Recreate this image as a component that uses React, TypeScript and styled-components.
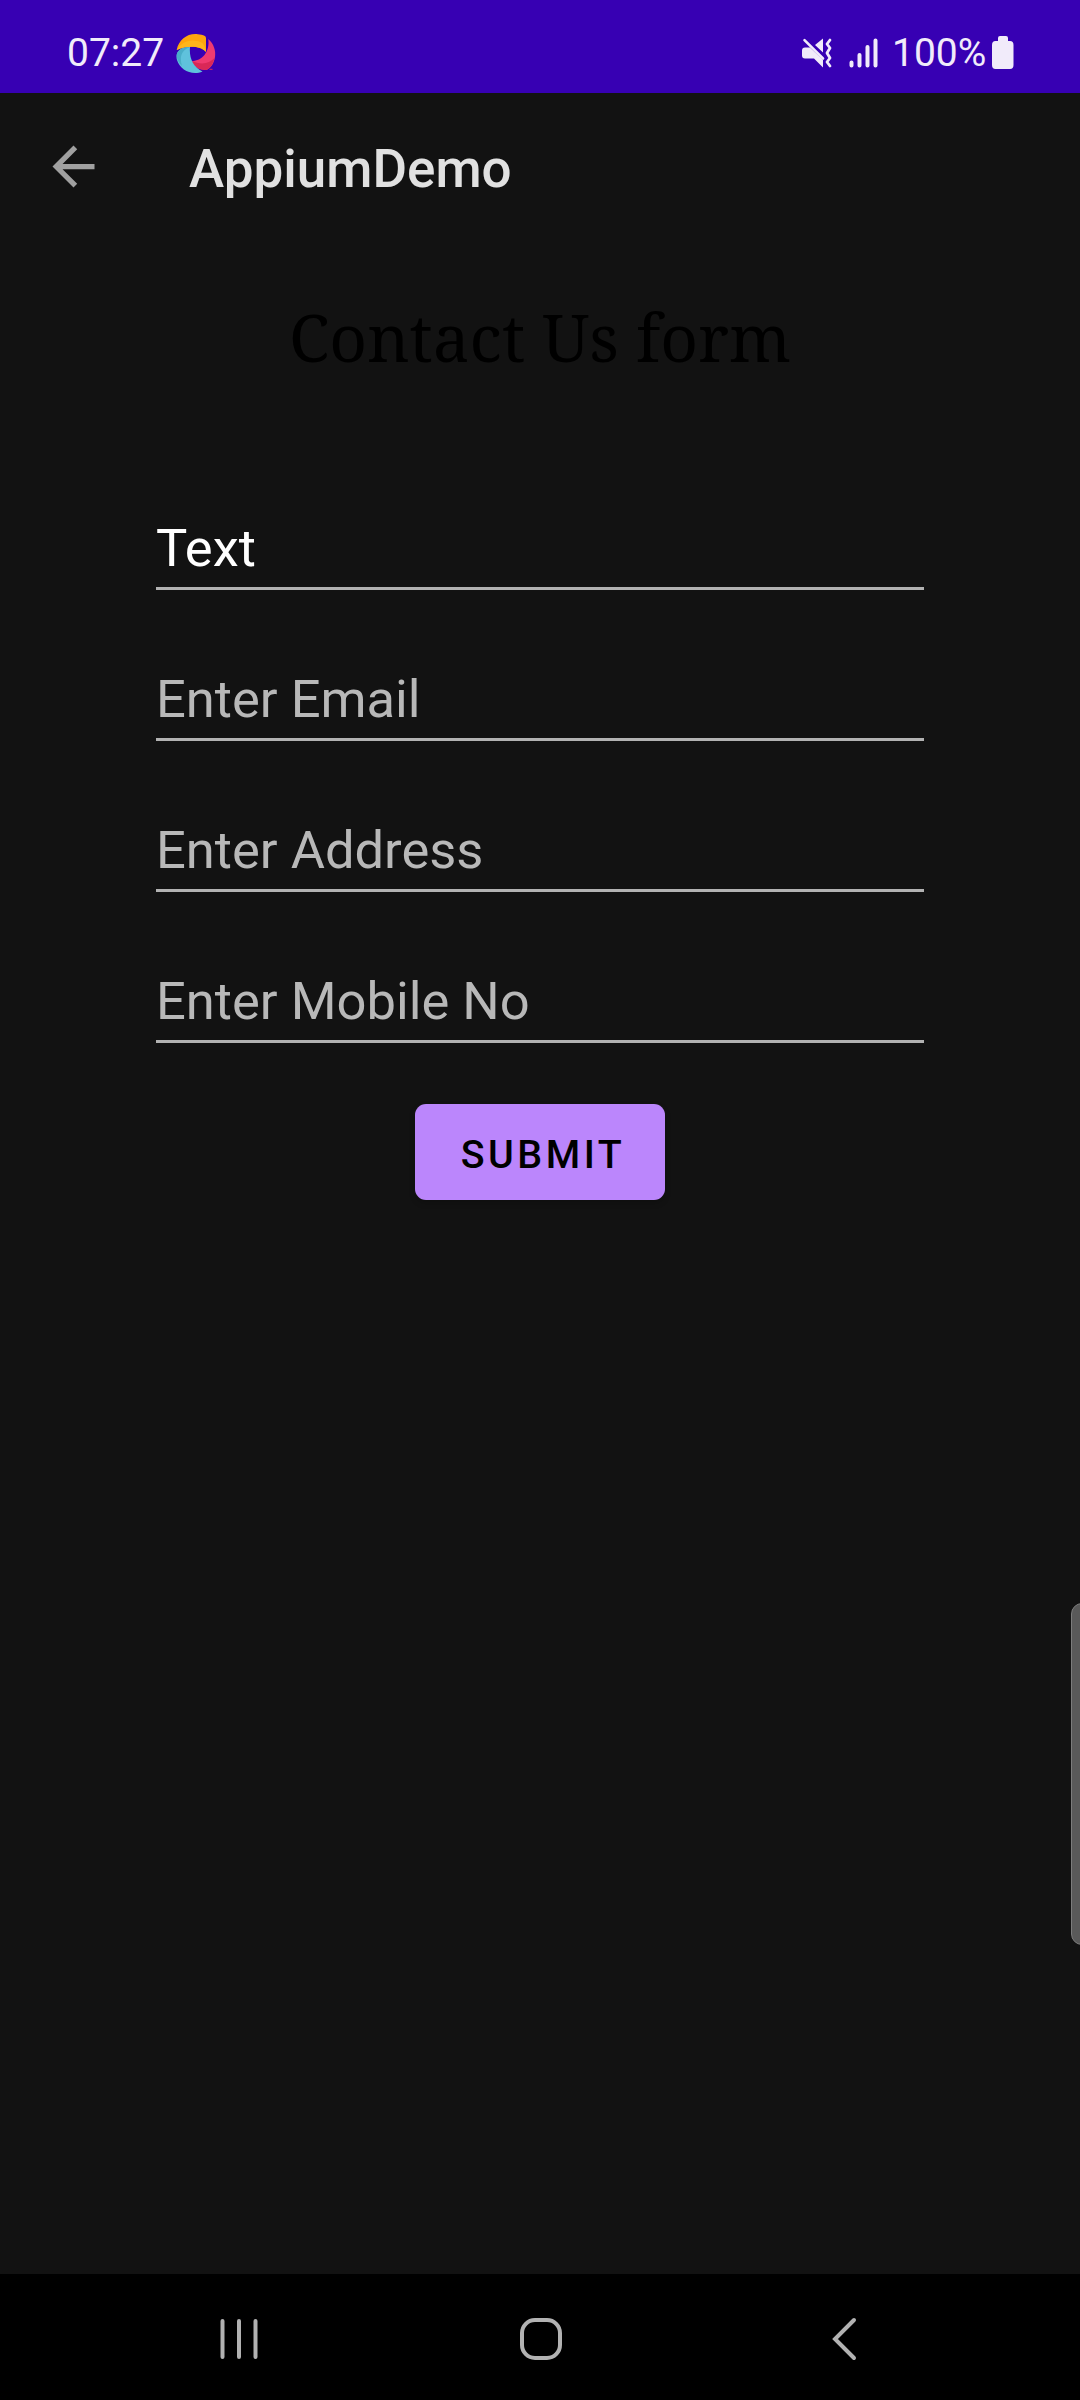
import React from "react";
import styled, { createGlobalStyle } from "styled-components";

const GlobalStyle = createGlobalStyle`
  * { box-sizing: border-box; }
  html, body { margin: 0; background: #121212; }
  body { font-family: Roboto, "Noto Sans", sans-serif; }
`;

const Screen = styled.div`
  display: flex;
  flex-direction: column;
  width: 1080px;
  height: 2400px;
  overflow: hidden;
  position: relative;
  background: #121212;
`;

const StatusBar = styled.header`
  display: flex;
  align-items: center;
  justify-content: space-between;
  flex: none;
  height: 93px;
  padding: 12px 66px 0 67px;
  background: #3700b3;
  color: #f1ebfa;
  font-size: 39px;
  line-height: 46px;
`;

const StatusGroup = styled.div`
  display: flex;
  align-items: center;
`;

const Clock = styled.span`
  width: 109px;
  white-space: nowrap;
`;

const BatteryLevel = styled.span`
  width: 100px;
  margin-left: 14px;
  white-space: nowrap;
`;

const Toolbar = styled.div`
  display: flex;
  align-items: center;
  flex: none;
  height: 147px;
  padding: 4px 42px 0;
`;

const BackButton = styled.button`
  display: flex;
  margin: 0 84px 4px 0;
  padding: 0;
  border: 0;
  background: none;
`;

const AppTitle = styled.h1`
  margin: 0;
  color: #e1e1e1;
  font-size: 53px;
  font-weight: 500;
  line-height: 62px;
`;

const Form = styled.form`
  display: flex;
  flex-direction: column;
  align-items: center;
  flex: 1;
  padding-top: 52px;
`;

const FormTitle = styled.h2`
  margin: 0 0 125px;
  color: #000;
  font-family: "Noto Serif", "Droid Serif", "DejaVu Serif Condensed", "DejaVu Serif", serif;
  font-size: 65.7px;
  font-weight: 400;
  line-height: 90px;
  white-space: nowrap;
`;

const Field = styled.input`
  display: block;
  width: 768px;
  height: 83px;
  margin: 0 0 68px;
  padding: 2px 0 0;
  border: 0;
  border-bottom: 3px solid #b2b2b2;
  border-radius: 0;
  outline: 0;
  background: none;
  color: #fff;
  font-family: inherit;
  font-size: 52.5px;
  line-height: 62px;

  &::placeholder {
    color: #b8b8b8;
    opacity: 1;
  }
`;

const SubmitButton = styled.button`
  width: 250px;
  height: 96px;
  margin-top: -7px;
  padding: 6px 0 0 6px;
  border: 0;
  border-radius: 11px;
  background: #bb86fc;
  box-shadow: 0 3px 6px rgba(0, 0, 0, 0.2);
  color: #000;
  font-family: inherit;
  font-size: 39.4px;
  font-weight: 500;
  line-height: 48px;
  letter-spacing: 3.5px;
`;

const EdgeHandle = styled.div`
  position: absolute;
  top: 1603px;
  right: -13px;
  width: 22px;
  height: 342px;
  border: 1px solid #7c7c7c;
  border-radius: 11px;
  background: #595959;
`;

const NavBar = styled.nav`
  display: flex;
  align-items: center;
  justify-content: space-between;
  flex: none;
  height: 126px;
  padding: 6px 200px 0 210px;
  background: #000;
`;

const NavButton = styled.button`
  display: flex;
  padding: 0;
  border: 0;
  background: none;
`;

const Icon = styled.svg<{ $gap?: number; $drop?: number }>`
  display: block;
  flex: none;
  margin-left: ${({ $gap = 0 }) => $gap}px;
  margin-top: ${({ $drop = 0 }) => $drop}px;
`;

const fields = [
  { hint: "Enter Name", value: "Text" },
  { hint: "Enter Email" },
  { hint: "Enter Address" },
  { hint: "Enter Mobile No" },
];

function AppLogo() {
  return (
    <Icon $drop={2} width="40" height="40" viewBox="0 0 40 40">
      <path d="M0.7 16C3 5 12-1 22 0.3Q30 1 30 4V18C25 12 12 11 0.7 16Z" fill="#ffa50d" />
      <path d="M0.7 16C5 9 12 5 21 7C27 8 29 11 30 18C25 12 12 11 0.7 16Z" fill="#ffb51b" />
      <path d="M32.3 5C38 10 40 17 39 23C38 30 34 35 30 36C23 36 17 32 16 27C26 27 34 18 32.3 5Z" fill="#ef3a70" />
      <path d="M38.5 24C33 30 25 31 16 27C18 33 23 36 30 36C34 35 37 30 38.5 24Z" fill="#d92857" />
      <path d="M14 13C13 24 17 33 26.5 37.5C16 42 4 36 1 26C-1 19 3 13 14 13Z" fill="#5fc2dc" />
      <path d="M14 13C6 16 3 22 6 32C-2 24-2 14 14 13Z" fill="#49aec8" />
      <path d="M33.5 35.3h3" stroke="#d92857" strokeWidth="1" />
    </Icon>
  );
}

function MutedIcon() {
  return (
    <Icon width="31" height="30" viewBox="0 0 31 30" fill="currentColor">
      <path d="M3 9.5h5L21 22v7.5l-9-9H3q-3 0-3-3v-5q0-3 3-3zM13 7l8-6.5v14z" />
      <path d="M2.5 2.2L21 20.5" fill="none" stroke="currentColor" strokeWidth="2.6" strokeLinecap="round" />
      <path d="M28 2l-3 4 3 4-3 5 3 5-3 4 3 4" fill="none" stroke="currentColor" strokeWidth="2.8" strokeLinecap="round" strokeLinejoin="round" />
    </Icon>
  );
}

export default function App() {
  return (
    <>
      <GlobalStyle />
      <Screen>
        <StatusBar>
          <StatusGroup>
            <Clock>07:27</Clock>
            <AppLogo />
          </StatusGroup>
          <StatusGroup>
            <MutedIcon />
            <Icon $gap={16} width="29" height="30" viewBox="0 0 29 30" fill="none" stroke="currentColor" strokeWidth="4" strokeLinecap="round">
              <path d="M2.5 24.5v3M10.5 17v10.5M18.5 9v18.5M26.5 2.5v25" />
            </Icon>
            <BatteryLevel>100%</BatteryLevel>
            <Icon width="22" height="33" viewBox="0 0 22 33" fill="currentColor">
              <path d="M6 5V2q0-2 2-2h6q2 0 2 2v3h2q3.500 0 3.500 4v20q0 4-3.500 4H3.500q-3.500 0-3.500-4V9q0-4 3.500-4z" />
            </Icon>
          </StatusGroup>
        </StatusBar>

        <Toolbar>
          <BackButton type="button" aria-label="Back">
            <Icon width="63" height="63" viewBox="0 0 24 24" fill="#a0a0a0">
              <path d="M20 11H7.830l5.590-5.590L12 4l-8 8 8 8 1.410-1.410L7.830 13H20z" />
            </Icon>
          </BackButton>
          <AppTitle>AppiumDemo</AppTitle>
        </Toolbar>

        <Form onSubmit={(e) => e.preventDefault()}>
          <FormTitle>Contact Us form</FormTitle>
          {fields.map((f) => (
            <Field key={f.hint} placeholder={f.hint} defaultValue={f.value} />
          ))}
          <SubmitButton type="submit">SUBMIT</SubmitButton>
        </Form>

        <NavBar>
          <NavButton type="button" aria-label="Recents">
            <Icon width="60" height="60" viewBox="0 0 60 60" fill="none" stroke="#b2b2b2" strokeWidth="4" strokeLinecap="round">
              <path d="M12.500 11v36M29 11v36M45.500 11v36" />
            </Icon>
          </NavButton>
          <NavButton type="button" aria-label="Home">
            <Icon width="60" height="60" viewBox="0 0 60 60" fill="none" stroke="#b2b2b2" strokeWidth="4">
              <rect x="7" y="10" width="38" height="38" rx="13" />
            </Icon>
          </NavButton>
          <NavButton type="button" aria-label="Back">
            <Icon width="60" height="60" viewBox="0 0 60 60" fill="none" stroke="#b2b2b2" strokeWidth="4" strokeLinecap="round">
              <path d="M34 10L15 29L34 48" />
            </Icon>
          </NavButton>
        </NavBar>
        <EdgeHandle />
      </Screen>
    </>
  );
}
